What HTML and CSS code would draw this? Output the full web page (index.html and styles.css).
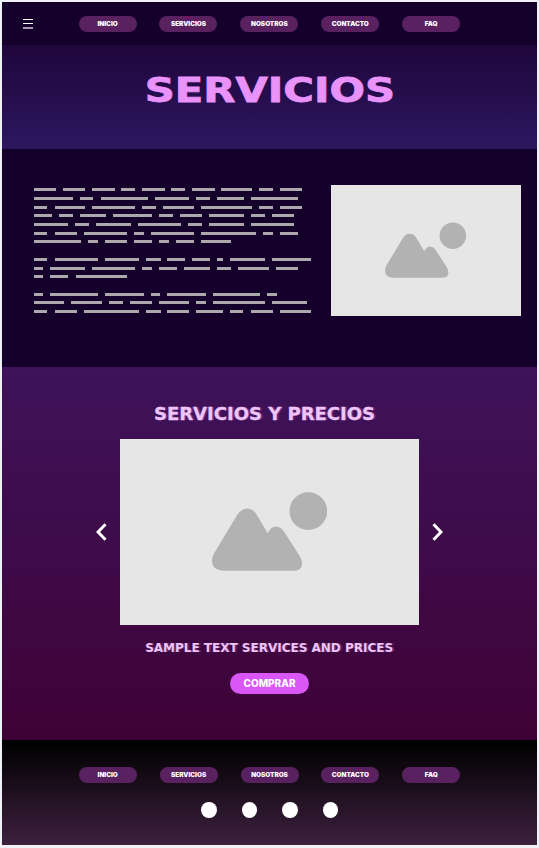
FILE: index.html
```html
<!DOCTYPE html>
<html lang="es">
<head>
<meta charset="utf-8">
<title>Servicios</title>
<link rel="stylesheet" href="styles.css">
</head>
<body>
<svg class="defs" width="0" height="0">
  <symbol id="picture" viewBox="0 0 345 236">
    <path d="M6 184 73 72Q87 49 105 49Q124 49 137 72L167 123Q177 103 192 103Q207 103 218 121L264 193Q270 203 270 215Q269 236 247 236H36Q0 234 0 205Q0 195 6 184Z"/>
    <circle cx="289" cy="57" r="56.5"/>
  </symbol>
</svg>
<div class="page">
  <header class="topbar">
    <svg class="menu" viewBox="0 0 10 11"><path d="M0 1.5H10M0 5.5H10"/><path class="faint" d="M0 10H10"/></svg>
    <nav class="nav"><a>INICIO</a><a>SERVICIOS</a><a>NOSOTROS</a><a>CONTACTO</a><a>FAQ</a></nav>
  </header>
  <section class="hero"><h1>SERVICIOS</h1></section>
  <section class="intro">
    <svg class="copy" viewBox="0 0 831 375">
      <path d="M0 4.500H65M87 4.500H153M174 4.500H242M262 4.500H303M324 4.500H392M411 4.500H454M474 4.500H542M562 4.500H654M675 4.500H717M738 4.500H804"/>
      <path d="M0 31.500H116M138 31.500H177M200 31.500H341M362 31.500H465M486 31.500H528M549 31.500H630M650 31.500H792"/>
      <path d="M0 58.500H39M63 58.500H153M174 58.500H303M324 58.500H366M387 58.500H479M501 58.500H654M675 58.500H717M738 58.500H804"/>
      <path d="M0 82.500H54M75 82.500H116M138 82.500H216M237 82.500H354M375 82.500H417M438 82.500H504M525 82.500H630M651 82.500H692M714 82.500H780"/>
      <path d="M0 109.500H103M124 109.500H166M187 109.500H291M312 109.500H441M462 109.500H504M525 109.500H630M650 109.500H780"/>
      <path d="M0 136.500H39M63 136.500H129M150 136.500H279M300 136.500H329M350 136.500H479M501 136.500H666M687 136.500H717M738 136.500H792"/>
      <path d="M0 160.500H141M162 160.500H191M212 160.500H279M300 160.500H354M375 160.500H404M426 160.500H480M501 160.500H591"/>
      <path d="M0 214.500H39M63 214.500H191M212 214.500H315M336 214.500H380M399 214.500H453M474 214.500H528M549 214.500H567M588 214.500H692M713 214.500H830"/>
      <path d="M0 241.500H27M48 241.500H153M174 241.500H303M324 241.500H354M375 241.500H429M450 241.500H528M549 241.500H591M612 241.500H705M726 241.500H792"/>
      <path d="M0 265.500H27M48 265.500H103M125 265.500H279"/>
      <path d="M0 319.500H27M48 319.500H191M212 319.500H329M350 319.500H379M399 319.500H516M537 319.500H678M699 319.500H729"/>
      <path d="M0 343.500H91M111 343.500H204M225 343.500H266M288 343.500H354M375 343.500H465M487 343.500H516M537 343.500H692M713 343.500H818"/>
      <path d="M0 370.500H39M63 370.500H129M150 370.500H315M336 370.500H380M399 370.500H465M487 370.500H567M588 370.500H627M651 370.500H717M738 370.500H830"/>
    </svg>
    <div class="photo"><svg><use href="#picture"/></svg></div>
  </section>
  <section class="prices">
    <h2>SERVICIOS Y PRECIOS</h2>
    <div class="carousel">
      <svg class="arrow" viewBox="0 0 11 18"><path d="M9.500 1.300 2 9 9.500 16.700"/></svg>
      <div class="slide"><svg><use href="#picture"/></svg></div>
      <svg class="arrow" viewBox="0 0 11 18"><path d="M1.500 1.300 9 9 1.500 16.700"/></svg>
    </div>
    <p class="caption">SAMPLE TEXT SERVICES AND PRICES</p>
    <button class="buy">COMPRAR</button>
  </section>
  <footer class="footer">
    <nav class="nav"><a>INICIO</a><a>SERVICIOS</a><a>NOSOTROS</a><a>CONTACTO</a><a>FAQ</a></nav>
    <div class="social"><i></i><i></i><i></i><i></i></div>
  </footer>
</div>
</body>
</html>
```
FILE: styles.css
```css
* { box-sizing: border-box; }
body { margin: 0; padding: 2px; height: 848px; background: #eff1f7; font-family: Inter, sans-serif; overflow: hidden; }
h1, h2, p { margin: 0; }
.defs { display: block; }
.page { width: 535px; height: 843px; }
.topbar { height: 43px; background: #14002b; display: flex; align-items: flex-start; padding: 14px 0 0 21px; }
.menu { width: 10px; height: 11px; margin: 2px 45.6px 0 0; stroke: #fff; stroke-width: 1; fill: none; }
.menu .faint { stroke: #a69bb0; stroke-width: 2; }
.nav { display: flex; gap: 22.9px; }
.nav a { width: 58px; height: 16px; border-radius: 8px; background: #5a2160; color: #fff; font-size: 6.4px; font-weight: 900; line-height: 16px; text-align: center; }
.hero { height: 104px; background: linear-gradient(#1f063c, #2d175f); display: flex; justify-content: center; align-items: flex-start; }
h1, h2, .caption { font-family: "DejaVu Sans", sans-serif; font-weight: bold; white-space: nowrap; }
h1 { color: #e892fa; font-size: 33px; line-height: 38px; margin-top: 27px; transform: scaleX(1.265); -webkit-text-stroke: 0.8px #e892fa; }
.intro { height: 218px; background: #14002b; display: flex; align-items: flex-start; padding: 36px 0 0 32px; }
.copy { width: 277px; height: 125px; margin: 3px 19.6px 0 0; stroke: #aca9ac; stroke-width: 9; fill: none; shape-rendering: crispEdges; }
.photo, .slide { background: #e6e6e6; fill: #b2b2b2; display: flex; align-items: center; justify-content: center; }
.photo { width: 190px; height: 131px; }
.photo svg { width: 81px; height: 56px; margin: 0 1px 1px 0; }
.prices { height: 373px; background: linear-gradient(#3e135b, #3f0236); display: flex; flex-direction: column; align-items: center; padding-top: 36px; }
h2 { color: #efc5f8; font-size: 18px; line-height: 22px; margin-right: 10px; text-shadow: 2px 0 #66277d; -webkit-text-stroke: 0.3px #efc5f8; }
.carousel { display: flex; align-items: center; gap: 13px; margin-top: 14px; }
.slide { width: 299px; height: 186px; }
.slide svg { width: 115px; height: 79px; margin-bottom: 1px; }
.arrow { width: 11px; height: 18px; fill: none; stroke: #fff; stroke-width: 3; }
.caption { color: #efc5f8; font-size: 12.5px; line-height: 16px; margin-top: 15px; text-shadow: 2px 0 #622369; transform: scaleX(0.96); }
.buy { margin-top: 17px; width: 79px; height: 21px; padding: 0; border: 0; border-radius: 11px; background: #d957f6; color: #fff; font: 800 10px/21px Inter, sans-serif; }
.footer { height: 105px; background: linear-gradient(#000, #3c203e); display: flex; flex-direction: column; align-items: center; padding-top: 27px; }
.social { display: flex; gap: 25px; margin-top: 19px; }
.social i { width: 15.5px; height: 16px; border-radius: 50%; background: #fff; }
```
